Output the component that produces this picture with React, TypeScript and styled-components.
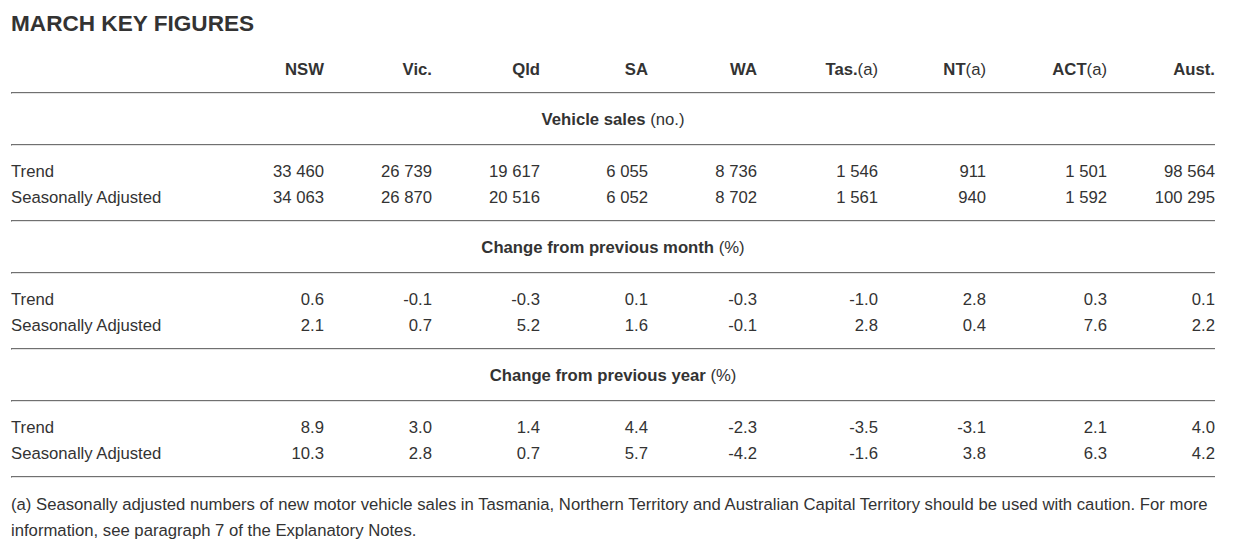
import React from "react";
import styled, { createGlobalStyle } from "styled-components";

const GlobalStyle = createGlobalStyle`
  html, body { margin: 0; padding: 0; background: #ffffff; }
  body {
    font-family: "Liberation Sans", Arial, sans-serif;
    color: #333333;
    font-size: 16.7px;
  }
`;

const Page = styled.div`
  width: 1204px;
  padding: 10px 0 0 11px;
`;

const Title = styled.h1`
  margin: 0;
  font-size: 22.6px;
  line-height: 27px;
  font-weight: bold;
  color: #333333;
`;

const COLS = "205px 108px 108px 108px 108px 109px 121px 108px 121px 108px";

const Row = styled.div<{ $header?: boolean }>`
  display: grid;
  grid-template-columns: ${COLS};
  height: 26px;
  line-height: 26px;
  font-weight: ${(p) => (p.$header ? "bold" : "normal")};
`;

const HeaderRow = styled(Row)`
  margin-top: 20px;
  margin-bottom: 9px;
`;

const Cell = styled.div<{ $label?: boolean }>`
  text-align: ${(p) => (p.$label ? "left" : "right")};
  white-space: nowrap;
`;

const Light = styled.span`
  font-weight: normal;
`;

const Rule = styled.hr`
  margin: 0;
  height: 0;
  border: none;
  border-top: 1px solid #707070;
  border-bottom: 1px solid #e4e4e4;
  border-left: 1px solid #707070;
  box-sizing: content-box;
`;

const GroupTitle = styled.div`
  height: 50px;
  padding-top: 2px;
  box-sizing: border-box;
  line-height: 48px;
  text-align: center;
  font-weight: bold;
`;

const Body = styled.div`
  padding: 13px 0 9px 0;
`;

const Note = styled.p`
  margin: 14px 0 0 0;
  line-height: 26px;
  white-space: nowrap;
`;

const headers: { bold: string; note?: string }[] = [
  { bold: "NSW" },
  { bold: "Vic." },
  { bold: "Qld" },
  { bold: "SA" },
  { bold: "WA" },
  { bold: "Tas.", note: "(a)" },
  { bold: "NT", note: "(a)" },
  { bold: "ACT", note: "(a)" },
  { bold: "Aust." },
];

const sections: { title: string; unit: string; rows: [string, string[]][] }[] = [
  {
    title: "Vehicle sales",
    unit: "(no.)",
    rows: [
      ["Trend", ["33 460", "26 739", "19 617", "6 055", "8 736", "1 546", "911", "1 501", "98 564"]],
      ["Seasonally Adjusted", ["34 063", "26 870", "20 516", "6 052", "8 702", "1 561", "940", "1 592", "100 295"]],
    ],
  },
  {
    title: "Change from previous month",
    unit: "(%)",
    rows: [
      ["Trend", ["0.6", "-0.1", "-0.3", "0.1", "-0.3", "-1.0", "2.8", "0.3", "0.1"]],
      ["Seasonally Adjusted", ["2.1", "0.7", "5.2", "1.6", "-0.1", "2.8", "0.4", "7.6", "2.2"]],
    ],
  },
  {
    title: "Change from previous year",
    unit: "(%)",
    rows: [
      ["Trend", ["8.9", "3.0", "1.4", "4.4", "-2.3", "-3.5", "-3.1", "2.1", "4.0"]],
      ["Seasonally Adjusted", ["10.3", "2.8", "0.7", "5.7", "-4.2", "-1.6", "3.8", "6.3", "4.2"]],
    ],
  },
];

export default function App() {
  return (
    <>
      <GlobalStyle />
      <Page>
        <Title>MARCH KEY FIGURES</Title>
        <HeaderRow $header>
          <Cell $label />
          {headers.map((h) => (
            <Cell key={h.bold}>
              {h.bold}
              {h.note && <Light>{h.note}</Light>}
            </Cell>
          ))}
        </HeaderRow>
        {sections.map((s) => (
          <React.Fragment key={s.title}>
            <Rule />
            <GroupTitle>
              {s.title} <Light>{s.unit}</Light>
            </GroupTitle>
            <Rule />
            <Body>
              {s.rows.map(([label, vals]) => (
                <Row key={label}>
                  <Cell $label>{label}</Cell>
                  {vals.map((v, i) => (
                    <Cell key={i}>{v}</Cell>
                  ))}
                </Row>
              ))}
            </Body>
          </React.Fragment>
        ))}
        <Rule />
        <Note>
          (a) Seasonally adjusted numbers of new motor vehicle sales in Tasmania, Northern Territory and Australian Capital Territory should be used with caution. For more
          <br />
          information, see paragraph 7 of the Explanatory Notes.
        </Note>
      </Page>
    </>
  );
}
